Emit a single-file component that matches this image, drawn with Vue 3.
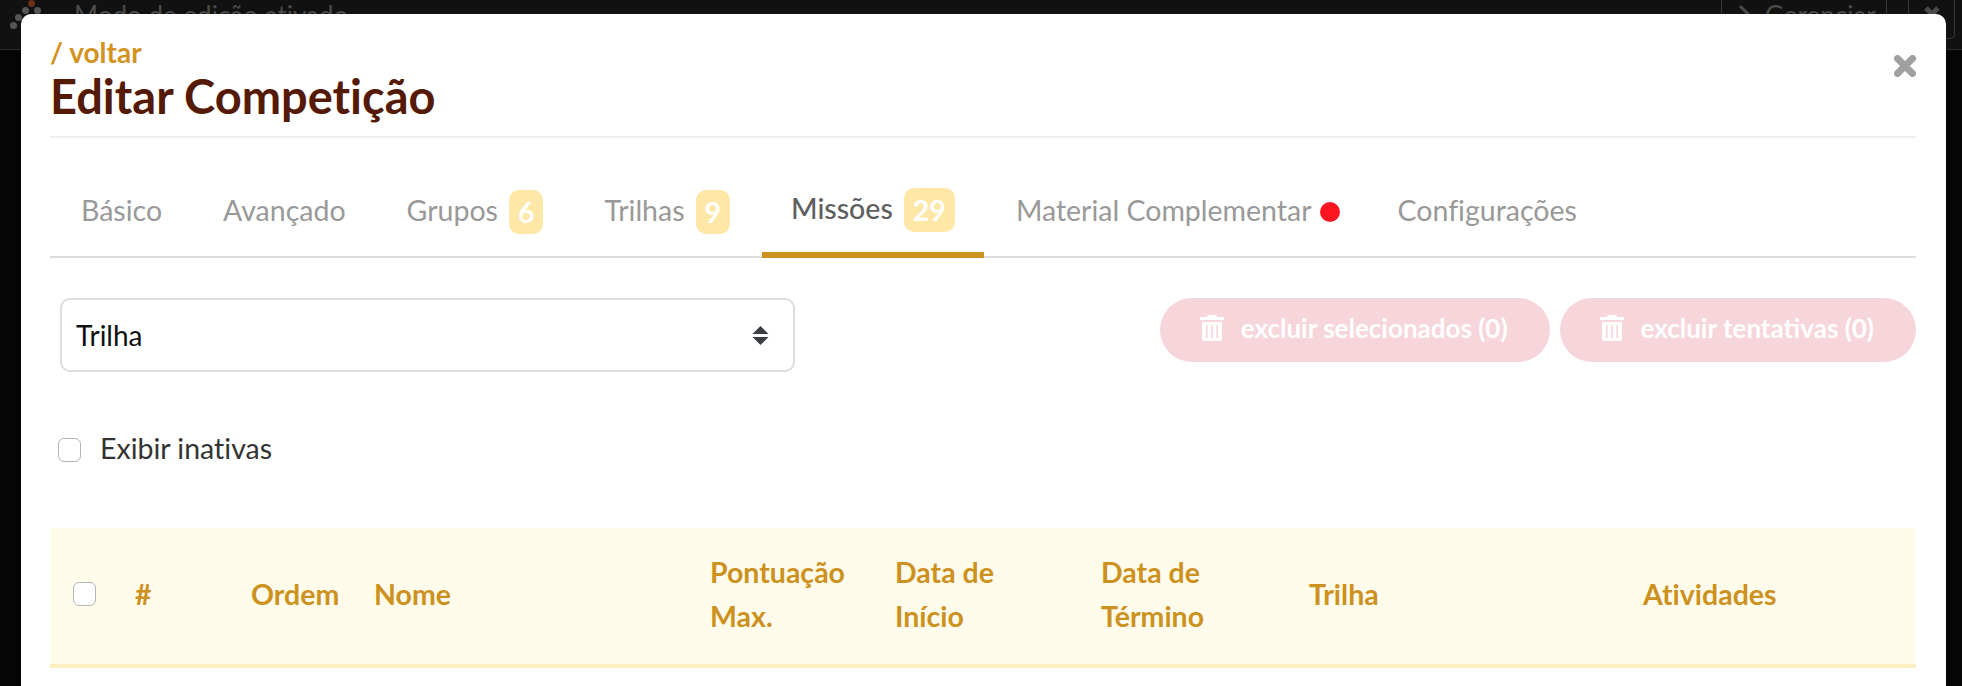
<script setup>
const tabs = [
  { label: 'Básico' },
  { label: 'Avançado' },
  { label: 'Grupos', badge: 6 },
  { label: 'Trilhas', badge: 9 },
  { label: 'Missões', badge: 29, active: true },
  { label: 'Material Complementar', dot: true },
  { label: 'Configurações' }
]

const actions = ['excluir selecionados (0)', 'excluir tentativas (0)']

const columns = [
  ['#'],
  ['Ordem'],
  ['Nome'],
  ['Pontuação', 'Max.'],
  ['Data de', 'Início'],
  ['Data de', 'Término'],
  ['Trilha'],
  ['Atividades']
]
</script>

<template>
  <div class="page">
    <div class="topbar">
      <div class="logo">
        <span class="ball ball-a"></span>
        <span class="ball ball-b"></span>
        <span class="ball ball-c"></span>
        <span class="ball ball-d"></span>
        <span class="ball ball-e"></span>
      </div>
      <span class="mode">Modo de edição ativado</span>
      <div class="top-actions">
        <div class="top-btn">
          <svg class="chev" viewBox="0 0 14 24"><path d="M2 2l10 10" /></svg>
          Gerenciar
        </div>
        <div class="top-close">
          <svg class="top-x" viewBox="0 0 18 18"><path d="M3 3l12 12M15 3L3 15" /></svg>
        </div>
      </div>
    </div>

    <div class="modal">
      <svg class="close" viewBox="0 0 22 22">
        <path d="M3.5 3.5l15 15M18.5 3.5l-15 15" />
      </svg>

      <header class="head">
        <a class="back">/ voltar</a>
        <h1 class="title">Editar Competição</h1>
      </header>

      <nav class="tabs">
        <div
          v-for="tab in tabs"
          :key="tab.label"
          class="tab"
          :class="{ active: tab.active }"
        >
          <span class="tab-label">{{ tab.label }}</span>
          <span v-if="tab.badge" class="badge">{{ tab.badge }}</span>
          <span v-if="tab.dot" class="dot"></span>
        </div>
      </nav>

      <div class="filters">
        <div class="select">
          <span>Trilha</span>
          <svg class="updown" viewBox="0 0 17 19">
            <path d="M8.5 0l8 8h-16zM8.5 19l-8-8h16z" />
          </svg>
        </div>
        <div class="actions">
          <button v-for="item in actions" :key="item" class="danger">
            <svg class="trash" viewBox="0 0 24 26">
              <path d="M8 0h8l1 2h6a1 1 0 0 1 1 1v1a1 1 0 0 1-1 1H1a1 1 0 0 1-1-1V3a1 1 0 0 1 1-1h6z" />
              <path fill-rule="evenodd" d="M2 7h20v17a2 2 0 0 1-2 2H4a2 2 0 0 1-2-2zM6 10v13h1.6V10zM11.2 10v13h1.6V10zM16.4 10v13H18V10z" />
            </svg>
            <span class="danger-label">{{ item }}</span>
          </button>
        </div>
      </div>

      <label class="inactive">
        <span class="box"></span>
        <span class="inactive-label">Exibir inativas</span>
      </label>

      <div class="thead">
        <div class="cell cell-check"><span class="box"></span></div>
        <div v-for="col in columns" :key="col.join()" class="cell">
          <div v-for="line in col" :key="line">{{ line }}</div>
        </div>
      </div>
    </div>
  </div>
</template>

<style>
body {
  background: #050505;
}
</style>

<style scoped>
.page {
  position: relative;
  height: 686px;
  overflow: hidden;
  background: #050505;
  font-family: Lato, "Open Sans", sans-serif;
  font-variant-ligatures: none;
}

.topbar {
  height: 50px;
  box-sizing: border-box;
  display: flex;
  padding: 0 7px 0 74px;
  background: #111;
  border-bottom: 1px solid #2a2a2a;
  color: #4a4a4a;
  font-size: 26px;
}

.logo {
  position: absolute;
  left: 0;
  top: 0;
  width: 44px;
  height: 32px;
}

.ball {
  position: absolute;
  width: 7px;
  height: 7px;
  border-radius: 50%;
  background: #555;
}

.ball-a { left: 28px; top: 0; background: #6a3216; }
.ball-b { left: 22px; top: 7px; }
.ball-c { left: 34px; top: 7px; }
.ball-d { left: 15px; top: 14px; }
.ball-e { left: 10px; top: 22px; }

.mode {
  line-height: 30px;
}

.top-actions {
  margin-left: auto;
  display: flex;
  gap: 21px;
}

.top-btn,
.top-close {
  height: 39px;
  box-sizing: border-box;
  border: 1px solid #3a3a3a;
  border-top: 0;
  border-radius: 0 0 5px 5px;
}

.top-btn {
  width: 166px;
  padding-left: 16px;
  display: flex;
  gap: 13px;
  line-height: 30px;
}

.top-close {
  width: 47px;
  padding: 5px 0 0 14px;
}

.top-x {
  display: block;
  width: 18px;
  height: 18px;
  fill: none;
  stroke: #4a4a4a;
  stroke-width: 5;
}

.chev {
  width: 14px;
  height: 24px;
  margin-top: 4px;
  fill: none;
  stroke: #4a4a4a;
  stroke-width: 3;
}

.modal {
  position: absolute;
  left: 21px;
  top: 14px;
  width: 1925px;
  height: 700px;
  box-sizing: border-box;
  padding: 0 30px 0 29px;
  background: #fff;
  border-radius: 10px;
}

.close {
  position: absolute;
  right: 30px;
  top: 41px;
  width: 22px;
  height: 22px;
  fill: none;
  stroke: #a0a0a0;
  stroke-width: 7;
  stroke-linecap: round;
}

.head {
  height: 124px;
  box-sizing: border-box;
  padding-top: 21px;
  border-bottom: 2px solid #eee;
}

.back {
  display: block;
  color: #d3931f;
  font-size: 28px;
  font-weight: 700;
  line-height: 34px;
}

.title {
  margin: 0;
  color: #551a06;
  font-size: 47px;
  font-weight: 700;
  line-height: 54px;
}

.tabs {
  height: 120px;
  box-sizing: border-box;
  display: flex;
  align-items: stretch;
  border-bottom: 2px solid #ddd;
}

.tab {
  display: flex;
  align-items: center;
  gap: 11px;
  padding: 30px 30px 0 31px;
  color: #999;
  font-size: 28.5px;
}

.tab-label {
  margin-bottom: 4px;
}

.tab.active {
  margin: 0 1px -2px 2px;
  padding-left: 29px;
  padding-right: 29px;
  color: #5f5f5f;
  font-weight: 500;
  border-bottom: 6px solid #cd9120;
}

.badge {
  min-width: 34px;
  height: 44px;
  box-sizing: border-box;
  padding: 0 9px;
  display: flex;
  align-items: center;
  justify-content: center;
  border-radius: 10px;
  background: #ffe7a8;
  color: #fff;
  font-weight: 700;
}

.dot {
  width: 20px;
  height: 20px;
  margin: 0 -3px 0 -3px;
  border-radius: 50%;
  background: #ff1520;
}

.filters {
  display: flex;
  justify-content: space-between;
  align-items: flex-start;
  padding: 40px 0 0 10px;
}

.select {
  width: 735px;
  height: 74px;
  box-sizing: border-box;
  display: flex;
  align-items: center;
  justify-content: space-between;
  padding: 0 24px 0 14px;
  border: 2px solid #ddd;
  border-radius: 10px;
  color: #111;
  font-size: 28px;
}

.updown {
  width: 17px;
  height: 19px;
  fill: #3a3d42;
}

.actions {
  display: flex;
  gap: 10px;
}

.danger {
  height: 64px;
  display: flex;
  align-items: center;
  gap: 17px;
  padding: 0 42px 0 40px;
  border: 0;
  border-radius: 32px;
  background: #f6d6db;
  color: #fff;
  font-family: inherit;
  font-size: 26px;
  font-weight: 700;
}

.danger-label {
  margin-bottom: 4px;
}

.trash {
  width: 24px;
  height: 26px;
  margin-bottom: 4px;
  fill: #fff;
}

.inactive {
  display: flex;
  align-items: center;
  gap: 19px;
  margin: 66px 0 0 8px;
  color: #333;
  font-size: 28.5px;
  line-height: 24px;
}

.inactive-label {
  margin-top: -4px;
}

.box {
  display: block;
  width: 23px;
  height: 24px;
  box-sizing: border-box;
  border: 1px solid #b5b5b5;
  border-radius: 6px;
  background: #fff;
}

.thead {
  display: grid;
  grid-template-columns: 85px 116px 123px 336px 185px 206px 208px 334px 1fr;
  align-items: center;
  height: 140px;
  box-sizing: border-box;
  margin-top: 66px;
  padding-bottom: 4px;
  background: #fffcec;
  border-bottom: 4px solid #feeec0;
  color: #cd9120;
  font-size: 28.5px;
  font-weight: 700;
  line-height: 44px;
}

.cell-check {
  padding-left: 23px;
}
</style>
